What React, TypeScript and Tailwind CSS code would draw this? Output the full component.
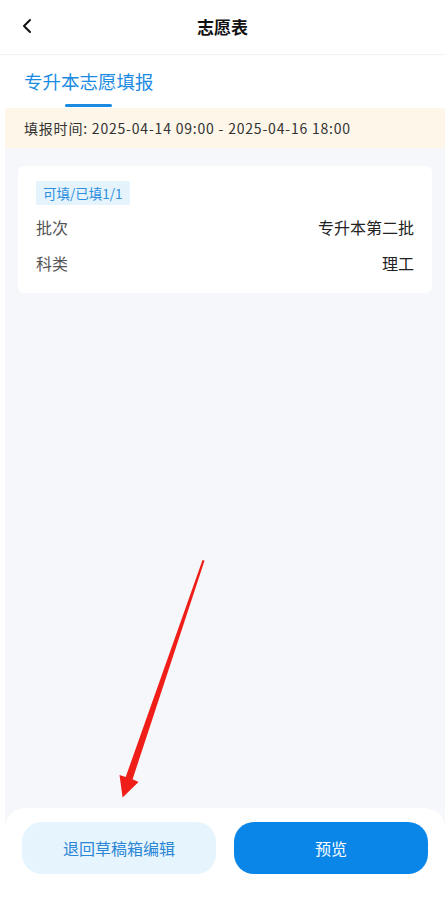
import React from "react";

const font = { fontFamily: '"Noto Sans CJK SC", "Noto Sans", sans-serif' };

function Arrow() {
  return (
    <svg
      className="pointer-events-none absolute left-0 top-0"
      width="445"
      height="900"
      viewBox="0 0 445 900"
    >
      <polygon
        points="202.5,560 204.5,560.8 132.6,779.2 138.5,782 122.6,797.5 119.5,775 125.7,777"
        fill="#f01e18"
      />
    </svg>
  );
}

export default function App() {
  return (
    <div className="relative flex h-[900px] w-[445px] flex-col bg-white" style={font}>
      {/* header */}
      <div className="relative flex h-[55px] shrink-0 items-center justify-center border-b border-[#f2f2f2]">
        <svg className="absolute left-[21px] top-[18px]" width="12" height="16" viewBox="0 0 12 16">
          <path d="M9 2 L3 8 L9 14" fill="none" stroke="#111" strokeWidth="2" strokeLinecap="round" strokeLinejoin="round" />
        </svg>
        <span className="text-[17px] font-bold text-[#111]">志愿表</span>
      </div>

      {/* tab */}
      <div className="flex h-[53px] shrink-0 flex-col items-start pl-[24px]">
        <div className="flex flex-col items-center">
          <span className="mt-[13px] text-[18.5px] leading-[26px] text-[#1a8be3]">专升本志愿填报</span>
          <div className="mt-[10px] h-[3px] w-[47px] rounded-full bg-[#1a8be3]" />
        </div>
      </div>

      <div className="ml-[5px] flex flex-1 flex-col bg-[#f5f7fa]">
        {/* notice */}
        <div className="flex h-[40px] shrink-0 items-center bg-[#fdf6e9] pl-[19px] text-[14px] tracking-[0.8px] text-[#333]">
          填报时间: 2025-04-14 09:00 - 2025-04-16 18:00
        </div>

        {/* card */}
        <div className="mx-[13px] mt-[18px] rounded-[6px] bg-white px-[18px] pb-[16px] pt-[14px]">
          <span className="inline-block rounded-[2px] bg-[#e5f3fd] px-[7px] py-[2px] text-[13.5px] leading-[20px] text-[#2d8fe0]">
            可填/已填1/1
          </span>
          <div className="mt-[8px] flex h-[28px] items-center justify-between text-[16px]">
            <span className="text-[#555]">批次</span>
            <span className="text-[#222]">专升本第二批</span>
          </div>
          <div className="mt-[8px] flex h-[28px] items-center justify-between text-[16px]">
            <span className="text-[#555]">科类</span>
            <span className="text-[#222]">理工</span>
          </div>
        </div>

        <div className="flex-1" />

        {/* bottom bar */}
        <div className="flex h-[92px] shrink-0 gap-[18px] rounded-t-[20px] bg-white px-[17px] pt-[14px]">
          <button className="flex h-[52px] flex-1 items-center justify-center rounded-[20px] bg-[#e6f4fd] text-[16px] text-[#2c86d6]">
            退回草稿箱编辑
          </button>
          <button className="flex h-[52px] flex-1 items-center justify-center rounded-[20px] bg-[#0a86e9] text-[16px] text-white">
            预览
          </button>
        </div>
      </div>

      <Arrow />
    </div>
  );
}
